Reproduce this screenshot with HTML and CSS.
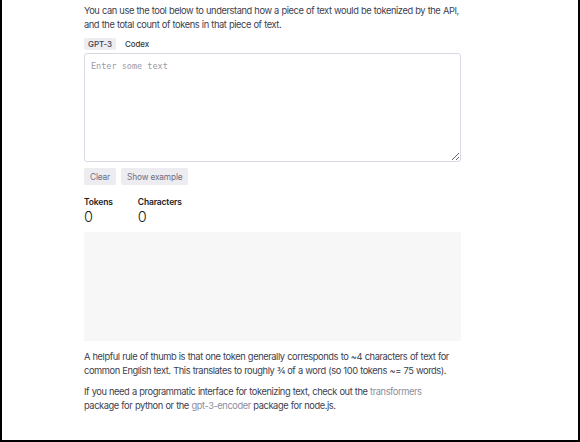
FILE: index.html
```html
<!DOCTYPE html>
<html>
<head>
<meta charset="utf-8">
<link rel="stylesheet" href="styles.css">
</head>
<body>
<div class="frame">
  <div class="col">
    <p class="intro">You can use the tool below to understand how a piece of text would be tokenized by the API,<br>and the total count of tokens in that piece of text.</p>
    <div class="tabs">
      <span class="tab active">GPT-3</span>
      <span class="tab">Codex</span>
    </div>
    <textarea class="input" placeholder="Enter some text"></textarea>
    <div class="buttons">
      <button class="btn">Clear</button>
      <button class="btn">Show example</button>
    </div>
    <div class="stats">
      <div class="stat">
        <div class="stat-label">Tokens</div>
        <div class="stat-value">0</div>
      </div>
      <div class="stat">
        <div class="stat-label">Characters</div>
        <div class="stat-value">0</div>
      </div>
    </div>
    <div class="output"></div>
    <p class="para">A helpful rule of thumb is that one token generally corresponds to ~4 characters of text for<br>common English text. This translates to roughly ¾ of a word (so 100 tokens ~= 75 words).</p>
    <p class="para">If you need a programmatic interface for tokenizing text, check out the <a class="link">transformers</a><br>package for python or the <a class="link">gpt-3-encoder</a> package for node.js.</p>
  </div>
</div>
</body>
</html>
```
FILE: styles.css
```css
html, body {
  margin: 0;
  padding: 0;
  background: #fff;
}
.frame {
  width: 580px;
  height: 442px;
  box-sizing: border-box;
  border-left: 2px solid #000;
  border-right: 2px solid #000;
  border-bottom: 2px solid #000;
  overflow: hidden;
}
.col {
  width: 377px;
  margin-left: 82px;
  font-family: Inter, "Noto Sans", sans-serif;
  font-feature-settings: "calt" 0;
  color: #40414f;
  font-size: 9.3px;
  letter-spacing: -0.42px;
  word-spacing: 0.35px;
}
.intro {
  margin: 4px 0 0;
  line-height: 14px;
  white-space: nowrap;
}
.tabs {
  display: flex;
  gap: 5px;
  margin-top: 6px;
}
.tab {
  font-size: 8px;
  font-weight: 500;
  padding: 0 4px;
  height: 12px;
  line-height: 12px;
  border-radius: 2px;
  color: #353740;
  letter-spacing: -0.1px;
}
.tab.active {
  background: #ececf1;
  color: #40414f;
}
.input {
  display: block;
  width: 377px;
  height: 109px;
  box-sizing: border-box;
  margin-top: 3px;
  border: 1px solid #d9d9e3;
  border-radius: 3px;
  padding: 6px 6px;
  font-family: "DejaVu Sans Mono", monospace;
  font-size: 8.5px;
  line-height: 12px;
  resize: vertical;
  outline: none;
}
.input::placeholder {
  color: #9a9aa8;
}
.buttons {
  display: flex;
  gap: 5px;
  margin-top: 6px;
}
.btn {
  font-family: Inter, "Noto Sans", sans-serif;
  font-size: 8.3px;
  letter-spacing: -0.15px;
  color: #6e6e80;
  background: #ececf1;
  border: none;
  border-radius: 2px;
  height: 17px;
  padding: 0 6px;
}
.stats {
  display: flex;
  gap: 25px;
  margin-top: 11px;
}
.stat-label {
  font-size: 8.5px;
  font-weight: 600;
  line-height: 12px;
  color: #202123;
  letter-spacing: -0.15px;
}
.stat-value {
  font-size: 14.5px;
  line-height: 18px;
  font-weight: 300;
  color: #202123;
}
.output {
  height: 109px;
  background: #f7f7f8;
  margin-top: 6px;
}
.para {
  margin: 9px 0 0;
  line-height: 14px;
  white-space: nowrap;
}
.para + .para {
  margin-top: 7px;
}
.link {
  color: #8e8ea0;
}
```
